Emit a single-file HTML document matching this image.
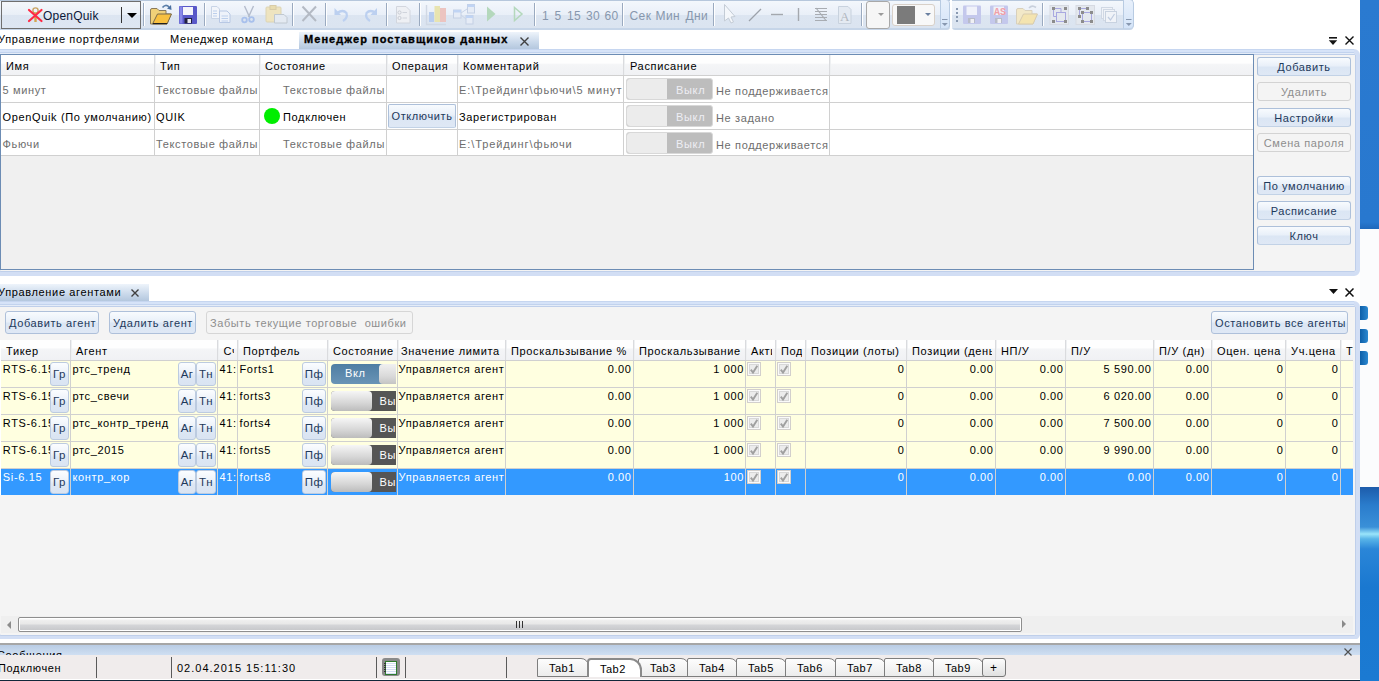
<!DOCTYPE html><html><head><meta charset="utf-8"><style>
*{box-sizing:border-box}
html,body{margin:0;padding:0}
body{width:1379px;height:681px;overflow:hidden;position:relative;background:#fff;font-family:"Liberation Sans", sans-serif;font-size:11px;color:#000}
.a{position:absolute}
.t{position:absolute;white-space:nowrap;line-height:13px;letter-spacing:.65px}
.sep{position:absolute;width:2px;background:#9aaac0;border-right:1px solid #fff}
.btn{position:absolute;border:1px solid #adc0da;border-bottom-color:#c2d2e6;border-radius:3px;background:linear-gradient(#f8fbfe,#e9f0f9 45%,#dbe6f4 55%,#dfe8f5);color:#1e395b;text-align:center;line-height:19px;white-space:nowrap;letter-spacing:.6px}
.btn.dis{border-color:#d3d3d3;background:#f4f4f4;color:#8d8d8d}
.gh{position:absolute;background:linear-gradient(#fefefe 0,#fefefe 38%,#f4f5f7 46%,#f0f1f4 100%)}
.vl{position:absolute;width:1px;background:#d0d0d0}
.hl{position:absolute;height:1px;background:#d0d0d0}
</style></head><body>
<div class="a" style="left:1360px;top:0;width:19px;height:229px;background:linear-gradient(#2a7ad0,#2878cf 97%,#1f68bb)"></div>
<div class="a" style="left:1360px;top:229px;width:19px;height:258px;background:#fbfcfd"></div>
<div class="a" style="left:1360px;top:306px;width:8px;height:14px;background:linear-gradient(90deg,#0d5fa8,#2b88d0);border-radius:0 3px 3px 0"></div>
<div class="a" style="left:1360px;top:329px;width:8px;height:14px;background:linear-gradient(90deg,#0d5fa8,#2b88d0);border-radius:0 3px 3px 0"></div>
<div class="a" style="left:1360px;top:351px;width:8px;height:14px;background:linear-gradient(90deg,#0d5fa8,#2b88d0);border-radius:0 3px 3px 0"></div>
<div class="a" style="left:1360px;top:487px;width:19px;height:194px;background:linear-gradient(#1d5cab 0,#2a7ccc 18px,#3a90d8 40px,#9ae4fa 47px,#58b4e8 52px,#2a86d8 62px,#1a78d0 100px,#1b7ad2 100%)"></div>
<div class="a" style="left:0;top:0;width:950px;height:30px;background:linear-gradient(#b6c7dc 0,#b6c7dc 1px,#f3f7fc 1px,#e9eff8 15px,#dce5f1 15px,#dbe4f0 28px,#c6d5e8 28px,#c6d5e8 30px);border-radius:0 0 3px 0"></div>
<div class="a" style="left:952px;top:0;width:181px;height:30px;background:linear-gradient(#b6c7dc 0,#b6c7dc 1px,#f3f7fc 1px,#e9eff8 15px,#dce5f1 15px,#dbe4f0 28px,#c6d5e8 28px,#c6d5e8 30px);border-radius:0 0 3px 3px"></div>
<div class="a" style="left:940px;top:0px;width:10px;height:29px;background:linear-gradient(#e8f0fb,#d4e4f8);border-left:1px solid #b8cbe2;border-right:1px solid #b8cbe2;border-bottom:1px solid #c4d4e8;border-radius:0 4px 4px 0"></div>
<div class="a" style="left:1123px;top:0px;width:11px;height:29px;background:linear-gradient(#e8f0fb,#d4e4f8);border-left:1px solid #b8cbe2;border-right:1px solid #b8cbe2;border-bottom:1px solid #c4d4e8;border-radius:0 4px 4px 0"></div>
<div class="a" style="left:1px;top:1px;width:140px;height:28px;border:1px solid #6f6f6f;background:linear-gradient(#f4f7fb,#e9eff7 48%,#dce5f1 52%,#dde6f2)"></div>
<div class="a" style="left:121px;top:7px;width:1px;height:16px;background:#333"></div>
<div class="a" style="left:127px;top:13px;width:0;height:0;border-left:5px solid transparent;border-right:5px solid transparent;border-top:5px solid #000"></div>
<div class="t" style="left:43px;top:10px;color:#0c1838;letter-spacing:.2px;font-size:12px">OpenQuik</div>
<div class="sep" style="left:143px;top:3px;height:23px"></div>
<div class="sep" style="left:204px;top:3px;height:23px"></div>
<div class="sep" style="left:292px;top:3px;height:23px"></div>
<div class="sep" style="left:325px;top:3px;height:23px"></div>
<div class="sep" style="left:386px;top:3px;height:23px"></div>
<div class="sep" style="left:419px;top:3px;height:23px"></div>
<div class="sep" style="left:534px;top:3px;height:23px"></div>
<div class="sep" style="left:622px;top:3px;height:23px"></div>
<div class="sep" style="left:713px;top:3px;height:23px"></div>
<div class="sep" style="left:861px;top:3px;height:23px"></div>
<div class="sep" style="left:1042px;top:3px;height:23px"></div>
<div class="t" style="left:542px;top:10px;color:#8797ad;font-size:12px;letter-spacing:.4px">1</div>
<div class="t" style="left:554.5px;top:10px;color:#8797ad;font-size:12px;letter-spacing:.4px">5</div>
<div class="t" style="left:567px;top:10px;color:#8797ad;font-size:12px;letter-spacing:.4px">15</div>
<div class="t" style="left:586px;top:10px;color:#8797ad;font-size:12px;letter-spacing:.4px">30</div>
<div class="t" style="left:604.5px;top:10px;color:#8797ad;font-size:12px;letter-spacing:.4px">60</div>
<div class="t" style="left:629.5px;top:10px;color:#8797ad;font-size:12px;letter-spacing:.4px">Сек</div>
<div class="t" style="left:655.5px;top:10px;color:#8797ad;font-size:12px;letter-spacing:.4px">Мин</div>
<div class="t" style="left:685.5px;top:10px;color:#8797ad;font-size:12px;letter-spacing:.4px">Дни</div>
<div class="a" style="left:866px;top:1px;width:24px;height:28px;border:1px solid #a8a8a8;border-radius:3px;background:#f6f6f6"></div>
<div class="a" style="left:878px;top:13px;border-left:3px solid transparent;border-right:3px solid transparent;border-top:3px solid #9a9a9a"></div>
<div class="a" style="left:892px;top:4px;width:43px;height:22px;border:1px solid #d8d0c8;border-radius:3px;background:#f8f8f8"></div>
<div class="a" style="left:897px;top:6px;width:18px;height:18px;background:#7b7b7b"></div>
<div class="a" style="left:925px;top:13px;border-left:3px solid transparent;border-right:3px solid transparent;border-top:3px solid #6a80a0"></div>
<svg class="a" style="left:0;top:0" width="1140" height="30"><circle cx="35.5" cy="10.5" r="2.6" fill="none" stroke="#c9a464" stroke-width="1.4"/><rect x="34.3" y="12.5" width="2.4" height="9.5" fill="#d2a550"/><path d="M29 10 L41.5 21 M41.5 10 L29 21" stroke="#ff2a44" stroke-width="2.2" stroke-linecap="round"/><path d="M150.5 24 V10 Q150.5 8.5 152 8.5 H157 L159 10.5 H166 V14 H171 L167 24 Z" fill="#f0d078" stroke="#8a7a5a" stroke-width="1"/><path d="M152.5 24 L157.5 14 H171.5 L167 24 Z" fill="#f8c040" stroke="#7a6a4a" stroke-width="1"/><path d="M153 23.5 H167" stroke="#202020" stroke-width="1"/><path d="M162.5 7.5 Q165.5 3.8 169 6.8" fill="none" stroke="#5a7ea8" stroke-width="1.7"/><path d="M167 8.5 L171.5 10 L171 5 Z" fill="#4a70a0"/><rect x="179" y="6" width="18" height="18" rx="1" fill="#5858c8"/><rect x="179.5" y="6.5" width="3" height="17" fill="#8888e8"/><rect x="183" y="7" width="10" height="8" fill="#f4f4fa"/><rect x="184.5" y="18" width="7.5" height="5.5" fill="#202040"/><rect x="187.5" y="19" width="3.5" height="4" fill="#e8e8f0"/><path d="M211.5 6.5 H217 L219.5 9 V18.5 H211.5 Z" fill="#f2f5fa" stroke="#c8d4e6"/><path d="M219.5 11 H227 L230 14 V22.5 H219.5 Z" fill="#eef2fa" stroke="#b8c8e4"/><path d="M213 11H217 M213 13.5H217 M213 16H217 M221.5 16H228 M221.5 18.5H228 M221.5 21H228" stroke="#bccfec" stroke-width="1"/><path d="M244.5 6 L249.5 17 M253.5 6 L248.5 17" stroke="#b4bccc" stroke-width="1.4"/><circle cx="244.5" cy="20" r="2.3" fill="none" stroke="#a8c0ec" stroke-width="1.8"/><circle cx="251.5" cy="19.5" r="2.3" fill="none" stroke="#a8c0ec" stroke-width="1.8"/><rect x="266" y="7" width="15" height="15" rx="1" fill="#eee4c0" stroke="#dcd4b4"/><rect x="270" y="5.5" width="6" height="4" fill="#e8dcb0" stroke="#d8cca8"/><path d="M274.5 14.5 H284 L287 17.5 V23 H274.5 Z" fill="#e4eaf2" stroke="#c0c8d0"/><path d="M302.5 6.5 L316 21 M316 6.5 L302.5 21" stroke="#b4bac4" stroke-width="2"/><path d="M337 13 Q343 9 346.5 13 Q348 18 343 21" fill="none" stroke="#bcd0f0" stroke-width="2.2"/><path d="M334.5 8 V15 H341 Z" fill="#bcd0f0"/><path d="M376 13 Q370 9 366.5 13 Q365 18 370 21" fill="none" stroke="#bcd0f0" stroke-width="2.2"/><path d="M377 8 V15 H370.5 Z" fill="#bcd0f0"/><path d="M396.5 6.5 H406 L410 10.5 V23 H396.5 Z" fill="#eef0f4" stroke="#d2d6de"/><circle cx="399.5" cy="12.5" r="1.6" fill="none" stroke="#c8ccd4"/><circle cx="399.5" cy="18" r="1.6" fill="none" stroke="#c8ccd4"/><path d="M402.5 12.5H407 M402.5 18H407" stroke="#d0d4dc"/><path d="M426.5 5 V24.5 H446" fill="none" stroke="#d0d8e4" stroke-width="1.4"/><rect x="429" y="12" width="5" height="10" fill="#b8cdf0"/><rect x="434.5" y="6" width="5.5" height="16" fill="#e8e4b0"/><rect x="440" y="8" width="6" height="14" fill="#ecc4c0"/><rect x="453.5" y="10" width="7.5" height="8" fill="#e6ecf6" stroke="#c4d0e4"/><rect x="453.5" y="10" width="7.5" height="2.5" fill="#c0d4f4"/><rect x="467.5" y="4.5" width="7" height="8.5" fill="#e6ecf6" stroke="#c4d0e4"/><rect x="467.5" y="4.5" width="7" height="2.5" fill="#c0d4f4"/><rect x="466" y="15.5" width="7" height="8.5" fill="#e6ecf6" stroke="#c4d0e4"/><rect x="466" y="15.5" width="7" height="2.5" fill="#c0d4f4"/><path d="M461 13 L467 9 M461 15 L466 19" stroke="#c8d4e8"/><path d="M487 6.5 L495.5 14 L487 21.5 Z" fill="#b4d8bc"/><path d="M514.5 7.5 L522 14 L514.5 20.5 Z" fill="none" stroke="#b4d8bc" stroke-width="1.5"/><path d="M724.5 4.5 V21 L728.5 18 L731 23 L733.5 22 L731 17 L735 16.5 Z" fill="#f4f7fb" stroke="#c4ccd6" stroke-width="1"/><path d="M749 21 L761 9" stroke="#9ca2aa" stroke-width="1.2"/><path d="M771 14.5 H783" stroke="#a4a8ae" stroke-width="1.4"/><path d="M798.5 8 V21" stroke="#a4a8ae" stroke-width="1.4"/><path d="M815 8.5H827 M815 11.5H827 M815 14.5H827 M815 17.5H827 M815 20.5H827" stroke="#a8acb2" stroke-width="1.2"/><path d="M816 8 L826 20.5" stroke="#a8acb2" stroke-width="1.2"/><path d="M838.5 6.5 H848 L851 9.5 V23.5 H838.5 Z" fill="#e4eaf2" stroke="#c8d2de"/><text x="840" y="21" font-family="Liberation Serif" font-size="13" fill="#b0b6be">A</text><rect x="956" y="8" width="2" height="2" fill="#8a9ab2"/><rect x="956" y="12" width="2" height="2" fill="#8a9ab2"/><rect x="956" y="16" width="2" height="2" fill="#8a9ab2"/><rect x="956" y="20" width="2" height="2" fill="#8a9ab2"/><rect x="963" y="5.5" width="18" height="18.5" rx="1" fill="#c4c8ec"/><rect x="966.5" y="6.5" width="10.5" height="8.5" fill="#f0f2fa"/><rect x="968" y="18" width="7" height="5" fill="#b8bcc8"/><rect x="970.5" y="19" width="3.5" height="4" fill="#f0f0f4"/><rect x="990" y="5.5" width="18" height="18.5" rx="1" fill="#c4c8ec"/><rect x="993.5" y="6.5" width="10.5" height="8.5" fill="#f0f2fa"/><rect x="995" y="18" width="7" height="5" fill="#b8bcc8"/><rect x="997.5" y="19" width="3.5" height="4" fill="#f0f0f4"/><text x="994" y="14.5" font-family="Liberation Mono" font-size="10" font-weight="bold" fill="#f0a0a8" letter-spacing="0">AS</text><path d="M1016.5 24 V10 Q1016.5 8.5 1018 8.5 H1023 L1025 10.5 H1032 V14 H1037 L1033 24 Z" fill="#f2e8c8" stroke="#d8d0bc" stroke-width="1"/><path d="M1018.5 24 L1023.5 14 H1037.5 L1033 24 Z" fill="#f4e4b0" stroke="#d8ccb0" stroke-width="1"/><path d="M1029 8 Q1032 4.5 1036 7.5" fill="none" stroke="#c8d0dc" stroke-width="1.6"/><rect x="1050" y="5.5" width="18.5" height="19" fill="#e4e8ee" stroke="#d6dae2"/><path d="M1053.5 8.5 H1061 V12.5 M1053.5 8.5 V16.5 H1056.5" fill="none" stroke="#a8a8e0" stroke-width="1"/><rect x="1056.5" y="12.5" width="9" height="9" fill="none" stroke="#a8a8e0"/><path d="M1052 7h3v3h-3z M1064 7h3v3h-3z M1052 20h3v3h-3z M1064 20h3v3h-3z" fill="#8c8c8c"/><rect x="1076" y="5.5" width="18.5" height="19" fill="#e4e8ee" stroke="#d6dae2"/><path d="M1079 8.5 H1087 M1079.5 8.5 V16.5" fill="none" stroke="#a8a8e0"/><rect x="1082.5" y="12.5" width="9" height="9" fill="none" stroke="#a8a8e0"/><path d="M1078 7h3v3h-3z M1086 7h3v3h-3z M1081 11h3v3h-3z M1090 11h3v3h-3z M1078 15h3v3h-3z M1081 20h3v3h-3z M1090 20h3v3h-3z" fill="#8c8c8c"/><rect x="1101.5" y="7.5" width="11" height="11" fill="#f0f3f8" stroke="#d0d8e4"/><rect x="1103.5" y="9.5" width="11" height="11" fill="#f0f3f8" stroke="#d0d8e4"/><rect x="1105.5" y="11.5" width="11" height="11" fill="#f0f3f8" stroke="#c8d2e0"/><path d="M1108 17 L1110.5 20 L1114.5 14" fill="none" stroke="#c0cce0" stroke-width="1.2"/><path d="M942 19.5 H947.5" stroke="#8898b0" stroke-width="1"/><path d="M941.8 23 H947.8 L944.8 26 Z" fill="#8898b0"/><path d="M1126 19.5 H1131.5" stroke="#8898b0" stroke-width="1"/><path d="M1125.8 23 H1131.8 L1128.8 26 Z" fill="#8898b0"/></svg>
<div class="t" style="left:-2px;top:33px;color:#000">Управление портфелями</div>
<div class="t" style="left:170px;top:33px;color:#000">Менеджер команд</div>
<div class="a" style="left:299px;top:32px;width:240px;height:17px;background:linear-gradient(#eef4fb,#c9d8ea 60%,#b4c7de)"></div>
<div class="t" style="left:304px;top:33px;font-weight:bold;letter-spacing:1.05px;-webkit-text-stroke:.35px #000">Менеджер поставщиков данных</div>
<svg class="a" style="left:520px;top:37px;z-index:5" width="9" height="9"><path d="M0.5 0.5 L8.5 8.5 M8.5 0.5 L0.5 8.5" stroke="#404040" stroke-width="1.4"/></svg>
<svg class="a" style="left:1345px;top:36px;z-index:5" width="9" height="9"><path d="M0.5 0.5 L8.5 8.5 M8.5 0.5 L0.5 8.5" stroke="#101010" stroke-width="1.4"/></svg>
<svg class="a" style="left:1328px;top:36px" width="10" height="10"><rect x="1" y="1" width="8" height="1.6" fill="#151515"/><path d="M0.8 4.3 H9.2 L5 9 Z" fill="#151515"/></svg>
<svg class="a" style="left:131px;top:289px;z-index:5" width="8" height="8"><path d="M0.5 0.5 L7.5 7.5 M7.5 0.5 L0.5 7.5" stroke="#404040" stroke-width="1.4"/></svg>
<svg class="a" style="left:1345px;top:288px;z-index:5" width="9" height="9"><path d="M0.5 0.5 L8.5 8.5 M8.5 0.5 L0.5 8.5" stroke="#101010" stroke-width="1.5"/></svg>
<svg class="a" style="left:1329px;top:289px;z-index:5" width="9" height="6"><path d="M0 0 H9 L4.5 5 Z" fill="#101010"/></svg>
<svg class="a" style="left:1344px;top:648px;z-index:5" width="8" height="8"><path d="M0.5 0.5 L7.5 7.5 M7.5 0.5 L0.5 7.5" stroke="#505050" stroke-width="1.2"/></svg>
<div class="a" style="left:-5px;top:49px;width:1365px;height:227px;background:#f4f4f4;border:4px solid #d2def4;border-top-width:5px;border-radius:6px;box-shadow:inset 0 0 0 1px #bfcfea"></div>
<div class="a" style="left:0;top:49px;width:1354px;height:5px;background:linear-gradient(#c6d6f0 0,#c6d6f0 1px,#d6e3f8 1px,#d6e3f8 3px,#c2d3ee 3px,#c2d3ee 4px,#e4ecf8 4px)"></div>
<div class="a" style="left:0;top:54px;width:1254px;height:216px;background:#f0f0f0;border:1px solid #6c8cb4"></div>
<div class="gh" style="left:1px;top:55px;width:1252px;height:21px"></div>
<div class="a" style="left:1px;top:76px;width:1252px;height:80px;background:#fff"></div>
<div class="hl" style="left:1px;top:75px;width:1252px"></div>
<div class="hl" style="left:1px;top:102px;width:1252px"></div>
<div class="hl" style="left:1px;top:129px;width:1252px"></div>
<div class="hl" style="left:1px;top:155px;width:1252px"></div>
<div class="vl" style="left:154px;top:76px;height:80px"></div>
<div class="a" style="left:154px;top:55px;width:1px;height:20px;background:#dadbde;box-shadow:1px 0 0 #eef0f2"></div>
<div class="vl" style="left:259px;top:76px;height:80px"></div>
<div class="a" style="left:259px;top:55px;width:1px;height:20px;background:#dadbde;box-shadow:1px 0 0 #eef0f2"></div>
<div class="vl" style="left:386px;top:76px;height:80px"></div>
<div class="a" style="left:386px;top:55px;width:1px;height:20px;background:#dadbde;box-shadow:1px 0 0 #eef0f2"></div>
<div class="vl" style="left:457px;top:76px;height:80px"></div>
<div class="a" style="left:457px;top:55px;width:1px;height:20px;background:#dadbde;box-shadow:1px 0 0 #eef0f2"></div>
<div class="vl" style="left:623px;top:76px;height:80px"></div>
<div class="a" style="left:623px;top:55px;width:1px;height:20px;background:#dadbde;box-shadow:1px 0 0 #eef0f2"></div>
<div class="vl" style="left:829px;top:76px;height:80px"></div>
<div class="a" style="left:829px;top:55px;width:1px;height:20px;background:#dadbde;box-shadow:1px 0 0 #eef0f2"></div>
<div class="btn" style="left:1257px;top:57px;width:94px;height:19px">Добавить</div>
<div class="btn dis" style="left:1257px;top:82px;width:94px;height:19px">Удалить</div>
<div class="btn" style="left:1257px;top:108px;width:94px;height:19px">Настройки</div>
<div class="btn dis" style="left:1257px;top:133px;width:94px;height:19px">Смена пароля</div>
<div class="btn" style="left:1257px;top:176px;width:94px;height:19px">По умолчанию</div>
<div class="btn" style="left:1257px;top:201px;width:94px;height:19px">Расписание</div>
<div class="btn" style="left:1257px;top:226px;width:94px;height:19px">Ключ</div>
<div class="a" style="left:0;top:284px;width:149px;height:17px;background:linear-gradient(#eef4fb,#c9d8ea 60%,#b4c7de)"></div>
<div class="t" style="left:-2px;top:286px">Управление агентами</div>
<div class="a" style="left:-5px;top:301px;width:1365px;height:339px;background:#f4f4f4;border:4px solid #d2def4;border-top-width:5px;border-radius:6px;box-shadow:inset 0 0 0 1px #bfcfea"></div>
<div class="a" style="left:0;top:301px;width:1354px;height:5px;background:linear-gradient(#c6d6f0 0,#c6d6f0 1px,#d6e3f8 1px,#d6e3f8 3px,#c2d3ee 3px,#c2d3ee 4px,#e4ecf8 4px)"></div>
<div class="t" style="left:6px;top:60px">Имя</div>
<div class="t" style="left:160px;top:60px">Тип</div>
<div class="t" style="left:265px;top:60px">Состояние</div>
<div class="t" style="left:392px;top:60px">Операция</div>
<div class="t" style="left:463px;top:60px">Комментарий</div>
<div class="t" style="left:630px;top:60px">Расписание</div>
<div class="a" style="left:1px;top:76px;width:153px;height:26px;overflow:hidden"><div class="t" style="left:1.5px;top:8px;color:#6d6d6d">5 минут</div></div>
<div class="a" style="left:155px;top:76px;width:104px;height:26px;overflow:hidden"><div class="t" style="left:1px;top:8px;color:#6d6d6d">Текстовые файлы</div></div>
<div class="a" style="left:260px;top:76px;width:126px;height:26px;overflow:hidden"><div class="t" style="left:23px;top:8px;color:#6d6d6d">Текстовые файлы</div></div>
<div class="a" style="left:458px;top:76px;width:165px;height:26px;overflow:hidden"><div class="t" style="left:1px;top:8px;color:#6d6d6d;letter-spacing:.9px">E:\Трейдинг\фьючи\5 минут</div></div>
<div class="a" style="left:626px;top:78px;width:87px;height:22px;border-radius:3px;background:#bdbdbd;border:1px solid #d8d8d8"></div>
<div class="a" style="left:627px;top:79px;width:40px;height:20px;border-radius:3px 0 0 3px;background:#ececec"></div>
<div class="t" style="left:676px;top:84px;color:#eeeef4">Выкл</div>
<div class="t" style="left:716px;top:85px;color:#6d6d6d">Не поддерживается</div>
<div class="a" style="left:1px;top:103px;width:153px;height:26px;overflow:hidden"><div class="t" style="left:1.5px;top:8px;color:#000">OpenQuik (По умолчанию)</div></div>
<div class="a" style="left:155px;top:103px;width:104px;height:26px;overflow:hidden"><div class="t" style="left:1px;top:8px;color:#000">QUIK</div></div>
<div class="a" style="left:260px;top:103px;width:126px;height:26px;overflow:hidden"><div class="t" style="left:23px;top:8px;color:#000">Подключен</div></div>
<div class="a" style="left:458px;top:103px;width:165px;height:26px;overflow:hidden"><div class="t" style="left:1px;top:8px;color:#000;letter-spacing:.65px">Зарегистрирован</div></div>
<div class="a" style="left:626px;top:105px;width:87px;height:22px;border-radius:3px;background:#bdbdbd;border:1px solid #d8d8d8"></div>
<div class="a" style="left:627px;top:106px;width:40px;height:20px;border-radius:3px 0 0 3px;background:#ececec"></div>
<div class="t" style="left:676px;top:111px;color:#eeeef4">Выкл</div>
<div class="t" style="left:716px;top:112px;color:#6d6d6d">Не задано</div>
<div class="btn" style="left:388px;top:104px;width:68px;height:24px;line-height:23px;border-radius:2px">Отключить</div>
<div class="a" style="left:1px;top:130px;width:153px;height:26px;overflow:hidden"><div class="t" style="left:1.5px;top:8px;color:#6d6d6d">Фьючи</div></div>
<div class="a" style="left:155px;top:130px;width:104px;height:26px;overflow:hidden"><div class="t" style="left:1px;top:8px;color:#6d6d6d">Текстовые файлы</div></div>
<div class="a" style="left:260px;top:130px;width:126px;height:26px;overflow:hidden"><div class="t" style="left:23px;top:8px;color:#6d6d6d">Текстовые файлы</div></div>
<div class="a" style="left:458px;top:130px;width:165px;height:26px;overflow:hidden"><div class="t" style="left:1px;top:8px;color:#6d6d6d;letter-spacing:.9px">E:\Трейдинг\фьючи</div></div>
<div class="a" style="left:626px;top:132px;width:87px;height:22px;border-radius:3px;background:#bdbdbd;border:1px solid #d8d8d8"></div>
<div class="a" style="left:627px;top:133px;width:40px;height:20px;border-radius:3px 0 0 3px;background:#ececec"></div>
<div class="t" style="left:676px;top:138px;color:#eeeef4">Выкл</div>
<div class="t" style="left:716px;top:139px;color:#6d6d6d">Не поддерживается</div>
<div class="a" style="left:264px;top:108px;width:16px;height:16px;border-radius:50%;background:#00ee00"></div>
<div style="position:absolute;border:1px solid #aec0da;border-radius:3px;background:linear-gradient(#f8fbfe,#e9f0f9 45%,#dbe6f4 55%,#dfe8f5);color:#1e395b;line-height:21px;white-space:nowrap;letter-spacing:.6px;padding-left:3px;padding-top:1px;left:5px;top:311px;width:94px;height:23px">Добавить агент</div>
<div style="position:absolute;border:1px solid #aec0da;border-radius:3px;background:linear-gradient(#f8fbfe,#e9f0f9 45%,#dbe6f4 55%,#dfe8f5);color:#1e395b;line-height:21px;white-space:nowrap;letter-spacing:.6px;padding-left:3px;padding-top:1px;left:109px;top:311px;width:87px;height:23px">Удалить агент</div>
<div style="position:absolute;border:1px solid #aec0da;border-radius:3px;background:linear-gradient(#f8fbfe,#e9f0f9 45%,#dbe6f4 55%,#dfe8f5);color:#1e395b;line-height:21px;white-space:nowrap;letter-spacing:.6px;padding-left:3px;padding-top:1px;left:206px;top:311px;width:207px;height:23px;background:#f4f4f4;border-color:#d6d6d6;color:#8e8e8e">Забыть текущие торговые&nbsp; ошибки</div>
<div style="position:absolute;border:1px solid #aec0da;border-radius:3px;background:linear-gradient(#f8fbfe,#e9f0f9 45%,#dbe6f4 55%,#dfe8f5);color:#1e395b;line-height:21px;white-space:nowrap;letter-spacing:.6px;padding-left:3px;padding-top:1px;left:1211px;top:311px;width:137px;height:23px">Остановить все агенты</div>
<div class="a" style="left:0;top:340px;width:1353px;height:155px;background:#fff"></div>
<div class="gh" style="left:1px;top:340px;width:1352px;height:20px"></div>
<div class="hl" style="left:1px;top:360px;width:1352px"></div>
<div class="a" style="left:1px;top:361px;width:1352px;height:26px;background:#ffffe0"></div>
<div class="hl" style="left:1px;top:387px;width:1352px"></div>
<div class="a" style="left:1px;top:388px;width:1352px;height:26px;background:#ffffe0"></div>
<div class="hl" style="left:1px;top:414px;width:1352px"></div>
<div class="a" style="left:1px;top:415px;width:1352px;height:26px;background:#ffffe0"></div>
<div class="hl" style="left:1px;top:441px;width:1352px"></div>
<div class="a" style="left:1px;top:442px;width:1352px;height:26px;background:#ffffe0"></div>
<div class="hl" style="left:1px;top:468px;width:1352px"></div>
<div class="a" style="left:1px;top:469px;width:1352px;height:26px;background:#3399ff"></div>
<div class="vl" style="left:70px;top:361px;height:134px"></div>
<div class="a" style="left:70px;top:340px;width:1px;height:20px;background:#dadbde;box-shadow:1px 0 0 #eef0f2"></div>
<div class="vl" style="left:217px;top:361px;height:134px"></div>
<div class="a" style="left:217px;top:340px;width:1px;height:20px;background:#dadbde;box-shadow:1px 0 0 #eef0f2"></div>
<div class="vl" style="left:237px;top:361px;height:134px"></div>
<div class="a" style="left:237px;top:340px;width:1px;height:20px;background:#dadbde;box-shadow:1px 0 0 #eef0f2"></div>
<div class="vl" style="left:327px;top:361px;height:134px"></div>
<div class="a" style="left:327px;top:340px;width:1px;height:20px;background:#dadbde;box-shadow:1px 0 0 #eef0f2"></div>
<div class="vl" style="left:397px;top:361px;height:134px"></div>
<div class="a" style="left:397px;top:340px;width:1px;height:20px;background:#dadbde;box-shadow:1px 0 0 #eef0f2"></div>
<div class="vl" style="left:505px;top:361px;height:134px"></div>
<div class="a" style="left:505px;top:340px;width:1px;height:20px;background:#dadbde;box-shadow:1px 0 0 #eef0f2"></div>
<div class="vl" style="left:633px;top:361px;height:134px"></div>
<div class="a" style="left:633px;top:340px;width:1px;height:20px;background:#dadbde;box-shadow:1px 0 0 #eef0f2"></div>
<div class="vl" style="left:745px;top:361px;height:134px"></div>
<div class="a" style="left:745px;top:340px;width:1px;height:20px;background:#dadbde;box-shadow:1px 0 0 #eef0f2"></div>
<div class="vl" style="left:775px;top:361px;height:134px"></div>
<div class="a" style="left:775px;top:340px;width:1px;height:20px;background:#dadbde;box-shadow:1px 0 0 #eef0f2"></div>
<div class="vl" style="left:805px;top:361px;height:134px"></div>
<div class="a" style="left:805px;top:340px;width:1px;height:20px;background:#dadbde;box-shadow:1px 0 0 #eef0f2"></div>
<div class="vl" style="left:906px;top:361px;height:134px"></div>
<div class="a" style="left:906px;top:340px;width:1px;height:20px;background:#dadbde;box-shadow:1px 0 0 #eef0f2"></div>
<div class="vl" style="left:995px;top:361px;height:134px"></div>
<div class="a" style="left:995px;top:340px;width:1px;height:20px;background:#dadbde;box-shadow:1px 0 0 #eef0f2"></div>
<div class="vl" style="left:1065px;top:361px;height:134px"></div>
<div class="a" style="left:1065px;top:340px;width:1px;height:20px;background:#dadbde;box-shadow:1px 0 0 #eef0f2"></div>
<div class="vl" style="left:1153px;top:361px;height:134px"></div>
<div class="a" style="left:1153px;top:340px;width:1px;height:20px;background:#dadbde;box-shadow:1px 0 0 #eef0f2"></div>
<div class="vl" style="left:1211px;top:361px;height:134px"></div>
<div class="a" style="left:1211px;top:340px;width:1px;height:20px;background:#dadbde;box-shadow:1px 0 0 #eef0f2"></div>
<div class="vl" style="left:1285px;top:361px;height:134px"></div>
<div class="a" style="left:1285px;top:340px;width:1px;height:20px;background:#dadbde;box-shadow:1px 0 0 #eef0f2"></div>
<div class="vl" style="left:1340px;top:361px;height:134px"></div>
<div class="a" style="left:1340px;top:340px;width:1px;height:20px;background:#dadbde;box-shadow:1px 0 0 #eef0f2"></div>
<div class="a" style="left:1px;top:340px;width:66px;height:20px;overflow:hidden"><div class="t" style="left:5px;top:5px">Тикер</div></div>
<div class="a" style="left:71px;top:340px;width:143px;height:20px;overflow:hidden"><div class="t" style="left:5px;top:5px">Агент</div></div>
<div class="a" style="left:218px;top:340px;width:16px;height:20px;overflow:hidden"><div class="t" style="left:5.5px;top:5px">Счет</div></div>
<div class="a" style="left:238px;top:340px;width:86px;height:20px;overflow:hidden"><div class="t" style="left:5px;top:5px">Портфель</div></div>
<div class="a" style="left:328px;top:340px;width:66px;height:20px;overflow:hidden"><div class="t" style="left:5px;top:5px">Состояние</div></div>
<div class="a" style="left:398px;top:340px;width:104px;height:20px;overflow:hidden"><div class="t" style="left:3px;top:5px">Значение лимита</div></div>
<div class="a" style="left:506px;top:340px;width:124px;height:20px;overflow:hidden"><div class="t" style="left:5px;top:5px">Проскальзывание %</div></div>
<div class="a" style="left:634px;top:340px;width:108px;height:20px;overflow:hidden"><div class="t" style="left:5px;top:5px">Проскальзывание</div></div>
<div class="a" style="left:746px;top:340px;width:26px;height:20px;overflow:hidden"><div class="t" style="left:5px;top:5px">Активен</div></div>
<div class="a" style="left:776px;top:340px;width:26px;height:20px;overflow:hidden"><div class="t" style="left:5px;top:5px">Подключен</div></div>
<div class="a" style="left:806px;top:340px;width:97px;height:20px;overflow:hidden"><div class="t" style="left:5px;top:5px">Позиции (лоты)</div></div>
<div class="a" style="left:907px;top:340px;width:85px;height:20px;overflow:hidden"><div class="t" style="left:5px;top:5px">Позиции (деньги)</div></div>
<div class="a" style="left:996px;top:340px;width:66px;height:20px;overflow:hidden"><div class="t" style="left:5px;top:5px">НП/У</div></div>
<div class="a" style="left:1066px;top:340px;width:84px;height:20px;overflow:hidden"><div class="t" style="left:5px;top:5px">П/У</div></div>
<div class="a" style="left:1154px;top:340px;width:54px;height:20px;overflow:hidden"><div class="t" style="left:5px;top:5px">П/У (дн)</div></div>
<div class="a" style="left:1212px;top:340px;width:70px;height:20px;overflow:hidden"><div class="t" style="left:5px;top:5px">Оцен. цена</div></div>
<div class="a" style="left:1286px;top:340px;width:51px;height:20px;overflow:hidden"><div class="t" style="left:5px;top:5px">Уч.цена</div></div>
<div class="a" style="left:1341px;top:340px;width:12px;height:20px;overflow:hidden"><div class="t" style="left:5px;top:5px">Т</div></div>
<div class="a" style="left:1px;top:361px;width:69px;height:26px;overflow:hidden"><div class="t" style="left:1.8px;top:2px;color:#000">RTS-6.15</div></div>
<div style="position:absolute;border:1px solid #bccbe0;border-radius:3px;background:linear-gradient(#fbfdff,#eef3fa 40%,#dde7f4 60%,#dae4f2);color:#1e395b;line-height:20px;text-align:center;letter-spacing:.4px;font-size:11.5px;left:50px;top:362px;width:19px;height:24px;padding-top:1px">Гр</div>
<div class="a" style="left:71px;top:361px;width:146px;height:26px;overflow:hidden"><div class="t" style="left:1.5px;top:2px;color:#000">ртс_тренд</div></div>
<div style="position:absolute;border:1px solid #bccbe0;border-radius:3px;background:linear-gradient(#fbfdff,#eef3fa 40%,#dde7f4 60%,#dae4f2);color:#1e395b;line-height:20px;text-align:center;letter-spacing:.4px;font-size:11.5px;left:178px;top:362px;width:18px;height:24px;padding-top:1px">Аг</div>
<div style="position:absolute;border:1px solid #bccbe0;border-radius:3px;background:linear-gradient(#fbfdff,#eef3fa 40%,#dde7f4 60%,#dae4f2);color:#1e395b;line-height:20px;text-align:center;letter-spacing:.4px;font-size:11.5px;left:196px;top:362px;width:20px;height:24px;padding-top:1px">Тн</div>
<div class="a" style="left:218px;top:361px;width:19px;height:26px;overflow:hidden"><div class="t" style="left:1.5px;top:2px;color:#000">41:</div></div>
<div class="a" style="left:238px;top:361px;width:89px;height:26px;overflow:hidden"><div class="t" style="left:1.5px;top:2px;color:#000">Forts1</div></div>
<div style="position:absolute;border:1px solid #bccbe0;border-radius:3px;background:linear-gradient(#fbfdff,#eef3fa 40%,#dde7f4 60%,#dae4f2);color:#1e395b;line-height:20px;text-align:center;letter-spacing:.4px;font-size:11.5px;left:302px;top:362px;width:24px;height:24px;padding-top:1px">Пф</div>
<div class="a" style="left:328px;top:361px;width:68px;height:26px;overflow:hidden">
<div class="a" style="left:3px;top:3px;width:70px;height:20px;border-radius:4px;background:linear-gradient(#4f7ea3,#6994b6)"></div>
<div class="t" style="left:17px;top:6px;color:#fff">Вкл</div>
<div class="a" style="left:51px;top:3px;width:30px;height:20px;border-radius:4px;background:linear-gradient(#f0f0f0,#dadada 60%,#c4c4c4)"></div>
</div>
<div class="a" style="left:398px;top:361px;width:107px;height:26px;overflow:hidden"><div class="t" style="left:0.5px;top:2px;color:#000">Управляется агент</div></div>
<div class="a" style="left:506px;top:361px;width:127px;height:26px;overflow:hidden"><div class="t" style="right:2px;top:2px;color:#000;letter-spacing:.65px;margin-right:-.65px">0.00</div></div>
<div class="a" style="left:634px;top:361px;width:111px;height:26px;overflow:hidden"><div class="t" style="right:1.5px;top:2px;color:#000;letter-spacing:.65px;margin-right:-.65px">1 000</div></div>
<div class="a" style="left:747px;top:362px;width:14px;height:14px;border:1px solid #d2cfcc;background:#ececec;box-shadow:inset 0 0 0 1px #fafafa,inset 0 0 0 2px #d8d8d8"></div>
<svg class="a" style="left:747px;top:362px" width="14" height="14"><path d="M3.8 7.6 L6 10.6 L10.3 3.8" stroke="#a0a0a0" stroke-width="1.9" fill="none"/></svg>
<div class="a" style="left:777px;top:362px;width:14px;height:14px;border:1px solid #d2cfcc;background:#ececec;box-shadow:inset 0 0 0 1px #fafafa,inset 0 0 0 2px #d8d8d8"></div>
<svg class="a" style="left:777px;top:362px" width="14" height="14"><path d="M3.8 7.6 L6 10.6 L10.3 3.8" stroke="#a0a0a0" stroke-width="1.9" fill="none"/></svg>
<div class="a" style="left:806px;top:361px;width:100px;height:26px;overflow:hidden"><div class="t" style="right:2px;top:2px;color:#000;letter-spacing:.65px;margin-right:-.65px">0</div></div>
<div class="a" style="left:907px;top:361px;width:88px;height:26px;overflow:hidden"><div class="t" style="right:2px;top:2px;color:#000;letter-spacing:.65px;margin-right:-.65px">0.00</div></div>
<div class="a" style="left:996px;top:361px;width:69px;height:26px;overflow:hidden"><div class="t" style="right:2px;top:2px;color:#000;letter-spacing:.65px;margin-right:-.65px">0.00</div></div>
<div class="a" style="left:1066px;top:361px;width:87px;height:26px;overflow:hidden"><div class="t" style="right:2px;top:2px;color:#000;letter-spacing:.65px;margin-right:-.65px">5 590.00</div></div>
<div class="a" style="left:1154px;top:361px;width:57px;height:26px;overflow:hidden"><div class="t" style="right:2px;top:2px;color:#000;letter-spacing:.65px;margin-right:-.65px">0.00</div></div>
<div class="a" style="left:1212px;top:361px;width:73px;height:26px;overflow:hidden"><div class="t" style="right:2px;top:2px;color:#000;letter-spacing:.65px;margin-right:-.65px">0</div></div>
<div class="a" style="left:1286px;top:361px;width:54px;height:26px;overflow:hidden"><div class="t" style="right:2px;top:2px;color:#000;letter-spacing:.65px;margin-right:-.65px">0</div></div>
<div class="a" style="left:1px;top:388px;width:69px;height:26px;overflow:hidden"><div class="t" style="left:1.8px;top:2px;color:#000">RTS-6.15</div></div>
<div style="position:absolute;border:1px solid #bccbe0;border-radius:3px;background:linear-gradient(#fbfdff,#eef3fa 40%,#dde7f4 60%,#dae4f2);color:#1e395b;line-height:20px;text-align:center;letter-spacing:.4px;font-size:11.5px;left:50px;top:389px;width:19px;height:24px;padding-top:1px">Гр</div>
<div class="a" style="left:71px;top:388px;width:146px;height:26px;overflow:hidden"><div class="t" style="left:1.5px;top:2px;color:#000">ртс_свечи</div></div>
<div style="position:absolute;border:1px solid #bccbe0;border-radius:3px;background:linear-gradient(#fbfdff,#eef3fa 40%,#dde7f4 60%,#dae4f2);color:#1e395b;line-height:20px;text-align:center;letter-spacing:.4px;font-size:11.5px;left:178px;top:389px;width:18px;height:24px;padding-top:1px">Аг</div>
<div style="position:absolute;border:1px solid #bccbe0;border-radius:3px;background:linear-gradient(#fbfdff,#eef3fa 40%,#dde7f4 60%,#dae4f2);color:#1e395b;line-height:20px;text-align:center;letter-spacing:.4px;font-size:11.5px;left:196px;top:389px;width:20px;height:24px;padding-top:1px">Тн</div>
<div class="a" style="left:218px;top:388px;width:19px;height:26px;overflow:hidden"><div class="t" style="left:1.5px;top:2px;color:#000">41:</div></div>
<div class="a" style="left:238px;top:388px;width:89px;height:26px;overflow:hidden"><div class="t" style="left:1.5px;top:2px;color:#000">forts3</div></div>
<div style="position:absolute;border:1px solid #bccbe0;border-radius:3px;background:linear-gradient(#fbfdff,#eef3fa 40%,#dde7f4 60%,#dae4f2);color:#1e395b;line-height:20px;text-align:center;letter-spacing:.4px;font-size:11.5px;left:302px;top:389px;width:24px;height:24px;padding-top:1px">Пф</div>
<div class="a" style="left:328px;top:388px;width:68px;height:26px;overflow:hidden">
<div class="a" style="left:3px;top:3px;width:70px;height:20px;border-radius:4px;background:#555"></div>
<div class="a" style="left:3px;top:3px;width:41px;height:20px;border-radius:4px;background:linear-gradient(#f6f6f6,#d6d6d6 60%,#bcbcbc)"></div>
<div class="t" style="left:51.5px;top:7px;color:#fff">Вы</div>
</div>
<div class="a" style="left:398px;top:388px;width:107px;height:26px;overflow:hidden"><div class="t" style="left:0.5px;top:2px;color:#000">Управляется агент</div></div>
<div class="a" style="left:506px;top:388px;width:127px;height:26px;overflow:hidden"><div class="t" style="right:2px;top:2px;color:#000;letter-spacing:.65px;margin-right:-.65px">0.00</div></div>
<div class="a" style="left:634px;top:388px;width:111px;height:26px;overflow:hidden"><div class="t" style="right:1.5px;top:2px;color:#000;letter-spacing:.65px;margin-right:-.65px">1 000</div></div>
<div class="a" style="left:747px;top:389px;width:14px;height:14px;border:1px solid #d2cfcc;background:#ececec;box-shadow:inset 0 0 0 1px #fafafa,inset 0 0 0 2px #d8d8d8"></div>
<svg class="a" style="left:747px;top:389px" width="14" height="14"><path d="M3.8 7.6 L6 10.6 L10.3 3.8" stroke="#a0a0a0" stroke-width="1.9" fill="none"/></svg>
<div class="a" style="left:777px;top:389px;width:14px;height:14px;border:1px solid #d2cfcc;background:#ececec;box-shadow:inset 0 0 0 1px #fafafa,inset 0 0 0 2px #d8d8d8"></div>
<svg class="a" style="left:777px;top:389px" width="14" height="14"><path d="M3.8 7.6 L6 10.6 L10.3 3.8" stroke="#a0a0a0" stroke-width="1.9" fill="none"/></svg>
<div class="a" style="left:806px;top:388px;width:100px;height:26px;overflow:hidden"><div class="t" style="right:2px;top:2px;color:#000;letter-spacing:.65px;margin-right:-.65px">0</div></div>
<div class="a" style="left:907px;top:388px;width:88px;height:26px;overflow:hidden"><div class="t" style="right:2px;top:2px;color:#000;letter-spacing:.65px;margin-right:-.65px">0.00</div></div>
<div class="a" style="left:996px;top:388px;width:69px;height:26px;overflow:hidden"><div class="t" style="right:2px;top:2px;color:#000;letter-spacing:.65px;margin-right:-.65px">0.00</div></div>
<div class="a" style="left:1066px;top:388px;width:87px;height:26px;overflow:hidden"><div class="t" style="right:2px;top:2px;color:#000;letter-spacing:.65px;margin-right:-.65px">6 020.00</div></div>
<div class="a" style="left:1154px;top:388px;width:57px;height:26px;overflow:hidden"><div class="t" style="right:2px;top:2px;color:#000;letter-spacing:.65px;margin-right:-.65px">0.00</div></div>
<div class="a" style="left:1212px;top:388px;width:73px;height:26px;overflow:hidden"><div class="t" style="right:2px;top:2px;color:#000;letter-spacing:.65px;margin-right:-.65px">0</div></div>
<div class="a" style="left:1286px;top:388px;width:54px;height:26px;overflow:hidden"><div class="t" style="right:2px;top:2px;color:#000;letter-spacing:.65px;margin-right:-.65px">0</div></div>
<div class="a" style="left:1px;top:415px;width:69px;height:26px;overflow:hidden"><div class="t" style="left:1.8px;top:2px;color:#000">RTS-6.15</div></div>
<div style="position:absolute;border:1px solid #bccbe0;border-radius:3px;background:linear-gradient(#fbfdff,#eef3fa 40%,#dde7f4 60%,#dae4f2);color:#1e395b;line-height:20px;text-align:center;letter-spacing:.4px;font-size:11.5px;left:50px;top:416px;width:19px;height:24px;padding-top:1px">Гр</div>
<div class="a" style="left:71px;top:415px;width:146px;height:26px;overflow:hidden"><div class="t" style="left:1.5px;top:2px;color:#000">ртс_контр_тренд</div></div>
<div style="position:absolute;border:1px solid #bccbe0;border-radius:3px;background:linear-gradient(#fbfdff,#eef3fa 40%,#dde7f4 60%,#dae4f2);color:#1e395b;line-height:20px;text-align:center;letter-spacing:.4px;font-size:11.5px;left:178px;top:416px;width:18px;height:24px;padding-top:1px">Аг</div>
<div style="position:absolute;border:1px solid #bccbe0;border-radius:3px;background:linear-gradient(#fbfdff,#eef3fa 40%,#dde7f4 60%,#dae4f2);color:#1e395b;line-height:20px;text-align:center;letter-spacing:.4px;font-size:11.5px;left:196px;top:416px;width:20px;height:24px;padding-top:1px">Тн</div>
<div class="a" style="left:218px;top:415px;width:19px;height:26px;overflow:hidden"><div class="t" style="left:1.5px;top:2px;color:#000">41:</div></div>
<div class="a" style="left:238px;top:415px;width:89px;height:26px;overflow:hidden"><div class="t" style="left:1.5px;top:2px;color:#000">forts4</div></div>
<div style="position:absolute;border:1px solid #bccbe0;border-radius:3px;background:linear-gradient(#fbfdff,#eef3fa 40%,#dde7f4 60%,#dae4f2);color:#1e395b;line-height:20px;text-align:center;letter-spacing:.4px;font-size:11.5px;left:302px;top:416px;width:24px;height:24px;padding-top:1px">Пф</div>
<div class="a" style="left:328px;top:415px;width:68px;height:26px;overflow:hidden">
<div class="a" style="left:3px;top:3px;width:70px;height:20px;border-radius:4px;background:#555"></div>
<div class="a" style="left:3px;top:3px;width:41px;height:20px;border-radius:4px;background:linear-gradient(#f6f6f6,#d6d6d6 60%,#bcbcbc)"></div>
<div class="t" style="left:51.5px;top:7px;color:#fff">Вы</div>
</div>
<div class="a" style="left:398px;top:415px;width:107px;height:26px;overflow:hidden"><div class="t" style="left:0.5px;top:2px;color:#000">Управляется агент</div></div>
<div class="a" style="left:506px;top:415px;width:127px;height:26px;overflow:hidden"><div class="t" style="right:2px;top:2px;color:#000;letter-spacing:.65px;margin-right:-.65px">0.00</div></div>
<div class="a" style="left:634px;top:415px;width:111px;height:26px;overflow:hidden"><div class="t" style="right:1.5px;top:2px;color:#000;letter-spacing:.65px;margin-right:-.65px">1 000</div></div>
<div class="a" style="left:747px;top:416px;width:14px;height:14px;border:1px solid #d2cfcc;background:#ececec;box-shadow:inset 0 0 0 1px #fafafa,inset 0 0 0 2px #d8d8d8"></div>
<svg class="a" style="left:747px;top:416px" width="14" height="14"><path d="M3.8 7.6 L6 10.6 L10.3 3.8" stroke="#a0a0a0" stroke-width="1.9" fill="none"/></svg>
<div class="a" style="left:777px;top:416px;width:14px;height:14px;border:1px solid #d2cfcc;background:#ececec;box-shadow:inset 0 0 0 1px #fafafa,inset 0 0 0 2px #d8d8d8"></div>
<svg class="a" style="left:777px;top:416px" width="14" height="14"><path d="M3.8 7.6 L6 10.6 L10.3 3.8" stroke="#a0a0a0" stroke-width="1.9" fill="none"/></svg>
<div class="a" style="left:806px;top:415px;width:100px;height:26px;overflow:hidden"><div class="t" style="right:2px;top:2px;color:#000;letter-spacing:.65px;margin-right:-.65px">0</div></div>
<div class="a" style="left:907px;top:415px;width:88px;height:26px;overflow:hidden"><div class="t" style="right:2px;top:2px;color:#000;letter-spacing:.65px;margin-right:-.65px">0.00</div></div>
<div class="a" style="left:996px;top:415px;width:69px;height:26px;overflow:hidden"><div class="t" style="right:2px;top:2px;color:#000;letter-spacing:.65px;margin-right:-.65px">0.00</div></div>
<div class="a" style="left:1066px;top:415px;width:87px;height:26px;overflow:hidden"><div class="t" style="right:2px;top:2px;color:#000;letter-spacing:.65px;margin-right:-.65px">7 500.00</div></div>
<div class="a" style="left:1154px;top:415px;width:57px;height:26px;overflow:hidden"><div class="t" style="right:2px;top:2px;color:#000;letter-spacing:.65px;margin-right:-.65px">0.00</div></div>
<div class="a" style="left:1212px;top:415px;width:73px;height:26px;overflow:hidden"><div class="t" style="right:2px;top:2px;color:#000;letter-spacing:.65px;margin-right:-.65px">0</div></div>
<div class="a" style="left:1286px;top:415px;width:54px;height:26px;overflow:hidden"><div class="t" style="right:2px;top:2px;color:#000;letter-spacing:.65px;margin-right:-.65px">0</div></div>
<div class="a" style="left:1px;top:442px;width:69px;height:26px;overflow:hidden"><div class="t" style="left:1.8px;top:2px;color:#000">RTS-6.15</div></div>
<div style="position:absolute;border:1px solid #bccbe0;border-radius:3px;background:linear-gradient(#fbfdff,#eef3fa 40%,#dde7f4 60%,#dae4f2);color:#1e395b;line-height:20px;text-align:center;letter-spacing:.4px;font-size:11.5px;left:50px;top:443px;width:19px;height:24px;padding-top:1px">Гр</div>
<div class="a" style="left:71px;top:442px;width:146px;height:26px;overflow:hidden"><div class="t" style="left:1.5px;top:2px;color:#000">ртс_2015</div></div>
<div style="position:absolute;border:1px solid #bccbe0;border-radius:3px;background:linear-gradient(#fbfdff,#eef3fa 40%,#dde7f4 60%,#dae4f2);color:#1e395b;line-height:20px;text-align:center;letter-spacing:.4px;font-size:11.5px;left:178px;top:443px;width:18px;height:24px;padding-top:1px">Аг</div>
<div style="position:absolute;border:1px solid #bccbe0;border-radius:3px;background:linear-gradient(#fbfdff,#eef3fa 40%,#dde7f4 60%,#dae4f2);color:#1e395b;line-height:20px;text-align:center;letter-spacing:.4px;font-size:11.5px;left:196px;top:443px;width:20px;height:24px;padding-top:1px">Тн</div>
<div class="a" style="left:218px;top:442px;width:19px;height:26px;overflow:hidden"><div class="t" style="left:1.5px;top:2px;color:#000">41:</div></div>
<div class="a" style="left:238px;top:442px;width:89px;height:26px;overflow:hidden"><div class="t" style="left:1.5px;top:2px;color:#000">forts5</div></div>
<div style="position:absolute;border:1px solid #bccbe0;border-radius:3px;background:linear-gradient(#fbfdff,#eef3fa 40%,#dde7f4 60%,#dae4f2);color:#1e395b;line-height:20px;text-align:center;letter-spacing:.4px;font-size:11.5px;left:302px;top:443px;width:24px;height:24px;padding-top:1px">Пф</div>
<div class="a" style="left:328px;top:442px;width:68px;height:26px;overflow:hidden">
<div class="a" style="left:3px;top:3px;width:70px;height:20px;border-radius:4px;background:#555"></div>
<div class="a" style="left:3px;top:3px;width:41px;height:20px;border-radius:4px;background:linear-gradient(#f6f6f6,#d6d6d6 60%,#bcbcbc)"></div>
<div class="t" style="left:51.5px;top:7px;color:#fff">Вы</div>
</div>
<div class="a" style="left:398px;top:442px;width:107px;height:26px;overflow:hidden"><div class="t" style="left:0.5px;top:2px;color:#000">Управляется агент</div></div>
<div class="a" style="left:506px;top:442px;width:127px;height:26px;overflow:hidden"><div class="t" style="right:2px;top:2px;color:#000;letter-spacing:.65px;margin-right:-.65px">0.00</div></div>
<div class="a" style="left:634px;top:442px;width:111px;height:26px;overflow:hidden"><div class="t" style="right:1.5px;top:2px;color:#000;letter-spacing:.65px;margin-right:-.65px">1 000</div></div>
<div class="a" style="left:747px;top:443px;width:14px;height:14px;border:1px solid #d2cfcc;background:#ececec;box-shadow:inset 0 0 0 1px #fafafa,inset 0 0 0 2px #d8d8d8"></div>
<svg class="a" style="left:747px;top:443px" width="14" height="14"><path d="M3.8 7.6 L6 10.6 L10.3 3.8" stroke="#a0a0a0" stroke-width="1.9" fill="none"/></svg>
<div class="a" style="left:777px;top:443px;width:14px;height:14px;border:1px solid #d2cfcc;background:#ececec;box-shadow:inset 0 0 0 1px #fafafa,inset 0 0 0 2px #d8d8d8"></div>
<svg class="a" style="left:777px;top:443px" width="14" height="14"><path d="M3.8 7.6 L6 10.6 L10.3 3.8" stroke="#a0a0a0" stroke-width="1.9" fill="none"/></svg>
<div class="a" style="left:806px;top:442px;width:100px;height:26px;overflow:hidden"><div class="t" style="right:2px;top:2px;color:#000;letter-spacing:.65px;margin-right:-.65px">0</div></div>
<div class="a" style="left:907px;top:442px;width:88px;height:26px;overflow:hidden"><div class="t" style="right:2px;top:2px;color:#000;letter-spacing:.65px;margin-right:-.65px">0.00</div></div>
<div class="a" style="left:996px;top:442px;width:69px;height:26px;overflow:hidden"><div class="t" style="right:2px;top:2px;color:#000;letter-spacing:.65px;margin-right:-.65px">0.00</div></div>
<div class="a" style="left:1066px;top:442px;width:87px;height:26px;overflow:hidden"><div class="t" style="right:2px;top:2px;color:#000;letter-spacing:.65px;margin-right:-.65px">9 990.00</div></div>
<div class="a" style="left:1154px;top:442px;width:57px;height:26px;overflow:hidden"><div class="t" style="right:2px;top:2px;color:#000;letter-spacing:.65px;margin-right:-.65px">0.00</div></div>
<div class="a" style="left:1212px;top:442px;width:73px;height:26px;overflow:hidden"><div class="t" style="right:2px;top:2px;color:#000;letter-spacing:.65px;margin-right:-.65px">0</div></div>
<div class="a" style="left:1286px;top:442px;width:54px;height:26px;overflow:hidden"><div class="t" style="right:2px;top:2px;color:#000;letter-spacing:.65px;margin-right:-.65px">0</div></div>
<div class="a" style="left:1px;top:469px;width:69px;height:26px;overflow:hidden"><div class="t" style="left:1.8px;top:2px;color:#fff">Si-6.15</div></div>
<div style="position:absolute;border:1px solid #bccbe0;border-radius:3px;background:linear-gradient(#fbfdff,#eef3fa 40%,#dde7f4 60%,#dae4f2);color:#1e395b;line-height:20px;text-align:center;letter-spacing:.4px;font-size:11.5px;left:50px;top:470px;width:19px;height:24px;padding-top:1px">Гр</div>
<div class="a" style="left:71px;top:469px;width:146px;height:26px;overflow:hidden"><div class="t" style="left:1.5px;top:2px;color:#fff">контр_кор</div></div>
<div style="position:absolute;border:1px solid #bccbe0;border-radius:3px;background:linear-gradient(#fbfdff,#eef3fa 40%,#dde7f4 60%,#dae4f2);color:#1e395b;line-height:20px;text-align:center;letter-spacing:.4px;font-size:11.5px;left:178px;top:470px;width:18px;height:24px;padding-top:1px">Аг</div>
<div style="position:absolute;border:1px solid #bccbe0;border-radius:3px;background:linear-gradient(#fbfdff,#eef3fa 40%,#dde7f4 60%,#dae4f2);color:#1e395b;line-height:20px;text-align:center;letter-spacing:.4px;font-size:11.5px;left:196px;top:470px;width:20px;height:24px;padding-top:1px">Тн</div>
<div class="a" style="left:218px;top:469px;width:19px;height:26px;overflow:hidden"><div class="t" style="left:1.5px;top:2px;color:#fff">41:</div></div>
<div class="a" style="left:238px;top:469px;width:89px;height:26px;overflow:hidden"><div class="t" style="left:1.5px;top:2px;color:#fff">forts8</div></div>
<div style="position:absolute;border:1px solid #bccbe0;border-radius:3px;background:linear-gradient(#fbfdff,#eef3fa 40%,#dde7f4 60%,#dae4f2);color:#1e395b;line-height:20px;text-align:center;letter-spacing:.4px;font-size:11.5px;left:302px;top:470px;width:24px;height:24px;padding-top:1px">Пф</div>
<div class="a" style="left:328px;top:469px;width:68px;height:26px;overflow:hidden">
<div class="a" style="left:3px;top:3px;width:70px;height:20px;border-radius:4px;background:#555"></div>
<div class="a" style="left:3px;top:3px;width:41px;height:20px;border-radius:4px;background:linear-gradient(#f6f6f6,#d6d6d6 60%,#bcbcbc)"></div>
<div class="t" style="left:51.5px;top:7px;color:#fff">Вы</div>
</div>
<div class="a" style="left:398px;top:469px;width:107px;height:26px;overflow:hidden"><div class="t" style="left:0.5px;top:2px;color:#fff">Управляется агент</div></div>
<div class="a" style="left:506px;top:469px;width:127px;height:26px;overflow:hidden"><div class="t" style="right:2px;top:2px;color:#fff;letter-spacing:.65px;margin-right:-.65px">0.00</div></div>
<div class="a" style="left:634px;top:469px;width:111px;height:26px;overflow:hidden"><div class="t" style="right:1.5px;top:2px;color:#fff;letter-spacing:.65px;margin-right:-.65px">100</div></div>
<div class="a" style="left:747px;top:470px;width:14px;height:14px;border:1px solid #d2cfcc;background:#ececec;box-shadow:inset 0 0 0 1px #fafafa,inset 0 0 0 2px #d8d8d8"></div>
<svg class="a" style="left:747px;top:470px" width="14" height="14"><path d="M3.8 7.6 L6 10.6 L10.3 3.8" stroke="#a0a0a0" stroke-width="1.9" fill="none"/></svg>
<div class="a" style="left:777px;top:470px;width:14px;height:14px;border:1px solid #d2cfcc;background:#ececec;box-shadow:inset 0 0 0 1px #fafafa,inset 0 0 0 2px #d8d8d8"></div>
<svg class="a" style="left:777px;top:470px" width="14" height="14"><path d="M3.8 7.6 L6 10.6 L10.3 3.8" stroke="#a0a0a0" stroke-width="1.9" fill="none"/></svg>
<div class="a" style="left:806px;top:469px;width:100px;height:26px;overflow:hidden"><div class="t" style="right:2px;top:2px;color:#fff;letter-spacing:.65px;margin-right:-.65px">0</div></div>
<div class="a" style="left:907px;top:469px;width:88px;height:26px;overflow:hidden"><div class="t" style="right:2px;top:2px;color:#fff;letter-spacing:.65px;margin-right:-.65px">0.00</div></div>
<div class="a" style="left:996px;top:469px;width:69px;height:26px;overflow:hidden"><div class="t" style="right:2px;top:2px;color:#fff;letter-spacing:.65px;margin-right:-.65px">0.00</div></div>
<div class="a" style="left:1066px;top:469px;width:87px;height:26px;overflow:hidden"><div class="t" style="right:2px;top:2px;color:#fff;letter-spacing:.65px;margin-right:-.65px">0.00</div></div>
<div class="a" style="left:1154px;top:469px;width:57px;height:26px;overflow:hidden"><div class="t" style="right:2px;top:2px;color:#fff;letter-spacing:.65px;margin-right:-.65px">0.00</div></div>
<div class="a" style="left:1212px;top:469px;width:73px;height:26px;overflow:hidden"><div class="t" style="right:2px;top:2px;color:#fff;letter-spacing:.65px;margin-right:-.65px">0</div></div>
<div class="a" style="left:1286px;top:469px;width:54px;height:26px;overflow:hidden"><div class="t" style="right:2px;top:2px;color:#fff;letter-spacing:.65px;margin-right:-.65px">0</div></div>
<div class="a" style="left:1px;top:616px;width:1352px;height:17px;background:#efefef"></div>
<div class="a" style="left:7px;top:621px;border-top:4px solid transparent;border-bottom:4px solid transparent;border-right:4px solid #8c8c8c"></div>
<div class="a" style="left:1342px;top:620px;border-top:4px solid transparent;border-bottom:4px solid transparent;border-left:4px solid #8a8a8a"></div>
<div class="a" style="left:18px;top:617px;width:1004px;height:15px;border:1px solid #8e8e8e;border-radius:2px;box-shadow:inset 0 0 0 1px #fff;background:linear-gradient(#ffffff 0,#ffffff 1px,#efefef 2px,#e8e8e8 45%,#d4d5d8 55%,#c8c9cc 90%,#e0e0e0 100%)"></div>
<div class="a" style="left:516px;top:621px;width:1px;height:7px;background:#333;box-shadow:3px 0 0 #333,6px 0 0 #333"></div>
<div class="a" style="left:0;top:639px;width:1360px;height:4px;background:#fff"></div>
<div class="a" style="left:0;top:643px;width:1360px;height:2px;background:#a6a6a6"></div>
<div class="a" style="left:0;top:645px;width:1360px;height:10px;background:linear-gradient(#b9cce4,#cfdff2)"></div>
<div class="a" style="left:0;top:655px;width:1360px;height:24px;background:#f0ecec"></div>
<div class="a" style="left:0;top:680px;width:1360px;height:1px;background:#12283a"></div>
<div class="a" style="left:0;top:645px;width:1340px;height:10px;overflow:hidden"><div class="t" style="left:-3px;top:4px;color:#000">Сообщения</div></div>
<div class="t" style="left:-2px;top:662px">Подключен</div>
<div class="a" style="left:96px;top:657px;width:1px;height:21px;background:#5a5a5a"></div>
<div class="a" style="left:171px;top:657px;width:1px;height:21px;background:#5a5a5a"></div>
<div class="a" style="left:376px;top:657px;width:1px;height:21px;background:#5a5a5a"></div>
<div class="a" style="left:405px;top:657px;width:1px;height:21px;background:#5a5a5a"></div>
<div class="a" style="left:506px;top:657px;width:1px;height:21px;background:#5a5a5a"></div>
<div class="t" style="left:177px;top:662px;letter-spacing:1px">02.04.2015 15:11:30</div>
<div class="a" style="left:382px;top:658px;width:18px;height:18px;border-radius:3px;background:#8a8a8a"></div>
<div class="a" style="left:385px;top:661px;width:12px;height:14px;background:repeating-linear-gradient(#fff 0,#fff 1px,#d4def4 1px,#d4def4 2px);border:1px solid #2f7a2f"></div>
<div class="a" style="left:384px;top:663px;width:2px;height:10px;background:repeating-linear-gradient(#333 0,#333 1px,transparent 1px,transparent 2px)"></div>
<div class="a" style="left:537px;top:658px;width:52px;height:19px;border:1px solid #7e7e7e;border-radius:2px 8px 0 0;background:linear-gradient(#fdfdfd,#ececec)"></div>
<div class="t" style="left:549px;top:662px;letter-spacing:.5px">Tab1</div>
<div class="a" style="left:638px;top:658px;width:51px;height:19px;border:1px solid #7e7e7e;border-radius:2px 8px 0 0;background:linear-gradient(#fdfdfd,#ececec)"></div>
<div class="t" style="left:650px;top:662px;letter-spacing:.5px">Tab3</div>
<div class="a" style="left:687px;top:658px;width:51px;height:19px;border:1px solid #7e7e7e;border-radius:2px 8px 0 0;background:linear-gradient(#fdfdfd,#ececec)"></div>
<div class="t" style="left:699px;top:662px;letter-spacing:.5px">Tab4</div>
<div class="a" style="left:736px;top:658px;width:51px;height:19px;border:1px solid #7e7e7e;border-radius:2px 8px 0 0;background:linear-gradient(#fdfdfd,#ececec)"></div>
<div class="t" style="left:748px;top:662px;letter-spacing:.5px">Tab5</div>
<div class="a" style="left:785px;top:658px;width:52px;height:19px;border:1px solid #7e7e7e;border-radius:2px 8px 0 0;background:linear-gradient(#fdfdfd,#ececec)"></div>
<div class="t" style="left:797px;top:662px;letter-spacing:.5px">Tab6</div>
<div class="a" style="left:835px;top:658px;width:51px;height:19px;border:1px solid #7e7e7e;border-radius:2px 8px 0 0;background:linear-gradient(#fdfdfd,#ececec)"></div>
<div class="t" style="left:847px;top:662px;letter-spacing:.5px">Tab7</div>
<div class="a" style="left:884px;top:658px;width:51px;height:19px;border:1px solid #7e7e7e;border-radius:2px 8px 0 0;background:linear-gradient(#fdfdfd,#ececec)"></div>
<div class="t" style="left:896px;top:662px;letter-spacing:.5px">Tab8</div>
<div class="a" style="left:933px;top:658px;width:51px;height:19px;border:1px solid #7e7e7e;border-radius:2px 8px 0 0;background:linear-gradient(#fdfdfd,#ececec)"></div>
<div class="t" style="left:945px;top:662px;letter-spacing:.5px">Tab9</div>
<div class="a" style="left:587px;top:658px;width:55px;height:19px;border:2px solid #8a8a8a;border-bottom:none;border-radius:4px 12px 0 0;background:#fff;z-index:2"></div>
<div class="t" style="left:600px;top:663px;letter-spacing:.5px;z-index:3">Tab2</div>
<div class="a" style="left:982px;top:658px;width:24px;height:19px;border:1.5px solid #777;border-radius:3px;background:linear-gradient(#fcfcfc,#e0e0e0)"></div>
<div class="t" style="left:990px;top:662px;font-size:12px;letter-spacing:0">+</div>
</body></html>
